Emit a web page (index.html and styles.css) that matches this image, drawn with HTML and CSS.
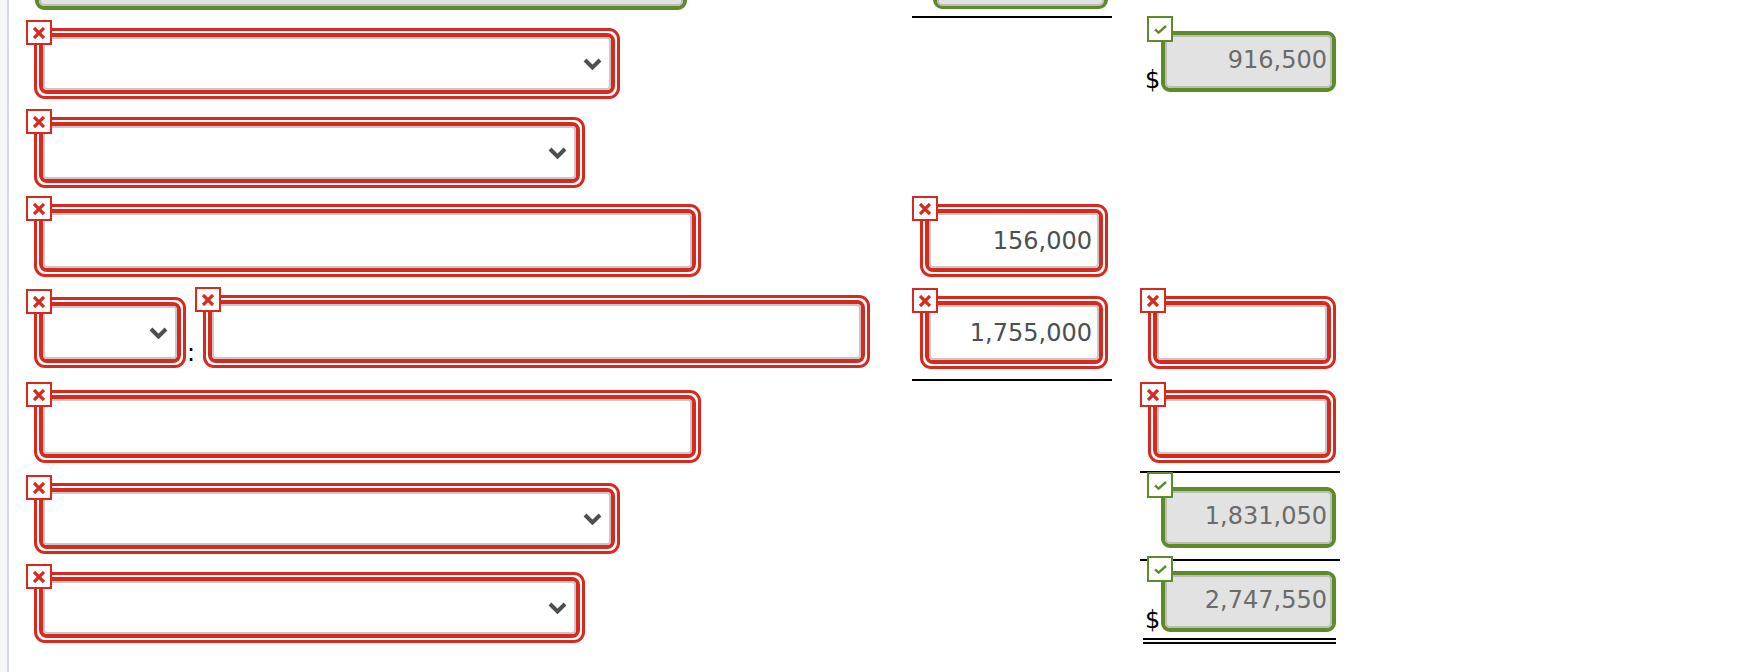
FILE: index.html
```html
<!DOCTYPE html>
<html lang="en">
<head>
<meta charset="UTF-8" />
<title>Worksheet</title>
<link rel="stylesheet" href="styles.css">
</head>
<body>
<div class="page">
  <div class="sheet">

    <!-- row 0 (cut off at top) -->
    <div class="cell">
      <div class="fld ok top-wide"><input class="ctl" readonly></div>
    </div>
    <div class="cell line">
      <div class="amt"><span class="cur"></span>
        <div class="fld ok top-amt"><input class="ctl" readonly></div>
      </div>
    </div>
    <div class="cell"></div>

    <!-- row 1 -->
    <div class="cell pt10">
      <div class="fld bad sel-long">
        <span class="badge"><svg viewBox="0 0 12 12"><path d="M1 1L11 11M11 1L1 11"/></svg></span>
        <div class="ring"><div class="ctl sel"><svg viewBox="0 0 19 12"><path d="M2 2L9.5 9.5L17 2"/></svg></div></div>
      </div>
    </div>
    <div class="cell"></div>
    <div class="cell pt13">
      <div class="amt"><span class="cur">$</span>
        <div class="fld ok">
          <span class="badge"><svg viewBox="0 0 13 9"><path d="M1 4.3L4.6 7.6L12 1"/></svg></span>
          <input class="ctl" value="916,500" readonly>
        </div>
      </div>
    </div>

    <!-- row 2 -->
    <div class="cell pt11">
      <div class="fld bad sel-short">
        <span class="badge"><svg viewBox="0 0 12 12"><path d="M1 1L11 11M11 1L1 11"/></svg></span>
        <div class="ring"><div class="ctl sel"><svg viewBox="0 0 19 12"><path d="M2 2L9.5 9.5L17 2"/></svg></div></div>
      </div>
    </div>
    <div class="cell"></div>
    <div class="cell"></div>

    <!-- row 3 -->
    <div class="cell pt10">
      <div class="fld bad txt-long">
        <span class="badge"><svg viewBox="0 0 12 12"><path d="M1 1L11 11M11 1L1 11"/></svg></span>
        <div class="ring"><input class="ctl" readonly></div>
      </div>
    </div>
    <div class="cell pt10">
      <div class="fld bad num">
        <span class="badge"><svg viewBox="0 0 12 12"><path d="M1 1L11 11M11 1L1 11"/></svg></span>
        <div class="ring"><input class="ctl" value="156,000" readonly></div>
      </div>
    </div>
    <div class="cell"></div>

    <!-- row 4 -->
    <div class="cell pt11">
      <div class="pair">
        <div class="fld bad sel-small">
          <span class="badge"><svg viewBox="0 0 12 12"><path d="M1 1L11 11M11 1L1 11"/></svg></span>
          <div class="ring"><div class="ctl sel"><svg viewBox="0 0 19 12"><path d="M2 2L9.5 9.5L17 2"/></svg></div></div>
        </div>
        <span class="colon">:</span>
        <div class="fld bad txt-long">
          <span class="badge"><svg viewBox="0 0 12 12"><path d="M1 1L11 11M11 1L1 11"/></svg></span>
          <div class="ring"><input class="ctl" readonly></div>
        </div>
      </div>
    </div>
    <div class="cell pt12 line">
      <div class="fld bad num">
        <span class="badge"><svg viewBox="0 0 12 12"><path d="M1 1L11 11M11 1L1 11"/></svg></span>
        <div class="ring"><input class="ctl" value="1,755,000" readonly></div>
      </div>
    </div>
    <div class="cell pt12">
      <div class="fld bad num">
        <span class="badge"><svg viewBox="0 0 12 12"><path d="M1 1L11 11M11 1L1 11"/></svg></span>
        <div class="ring"><input class="ctl" readonly></div>
      </div>
    </div>

    <!-- row 5 -->
    <div class="cell pt9">
      <div class="fld bad txt-long">
        <span class="badge"><svg viewBox="0 0 12 12"><path d="M1 1L11 11M11 1L1 11"/></svg></span>
        <div class="ring"><input class="ctl" readonly></div>
      </div>
    </div>
    <div class="cell"></div>
    <div class="cell pt9 line">
      <div class="fld bad num">
        <span class="badge"><svg viewBox="0 0 12 12"><path d="M1 1L11 11M11 1L1 11"/></svg></span>
        <div class="ring"><input class="ctl" readonly></div>
      </div>
    </div>

    <!-- row 6 -->
    <div class="cell pt10">
      <div class="fld bad sel-long">
        <span class="badge"><svg viewBox="0 0 12 12"><path d="M1 1L11 11M11 1L1 11"/></svg></span>
        <div class="ring"><div class="ctl sel"><svg viewBox="0 0 19 12"><path d="M2 2L9.5 9.5L17 2"/></svg></div></div>
      </div>
    </div>
    <div class="cell"></div>
    <div class="cell pt14 line">
      <div class="amt"><span class="cur"></span>
        <div class="fld ok">
          <span class="badge"><svg viewBox="0 0 13 9"><path d="M1 4.3L4.6 7.6L12 1"/></svg></span>
          <input class="ctl" value="1,831,050" readonly>
        </div>
      </div>
    </div>

    <!-- row 7 -->
    <div class="cell pt11">
      <div class="fld bad sel-short">
        <span class="badge"><svg viewBox="0 0 12 12"><path d="M1 1L11 11M11 1L1 11"/></svg></span>
        <div class="ring"><div class="ctl sel"><svg viewBox="0 0 19 12"><path d="M2 2L9.5 9.5L17 2"/></svg></div></div>
      </div>
    </div>
    <div class="cell"></div>
    <div class="cell pt10">
      <div class="amt dbl"><span class="cur">$</span>
        <div class="fld ok">
          <span class="badge"><svg viewBox="0 0 13 9"><path d="M1 4.3L4.6 7.6L12 1"/></svg></span>
          <input class="ctl" value="2,747,550" readonly>
        </div>
      </div>
    </div>

  </div>
</div>
</body>
</html>
```

FILE: styles.css
```css
html, body { margin:0; padding:0; height:100%; background:#f6f7f9; overflow:hidden; }
body { font-family:"DejaVu Sans", Verdana, sans-serif; font-size:24px; color:#000; }

.page { display:flow-root; margin-left:7px; border-left:2px solid #d5dae4; background:#fff; height:100vh; overflow:hidden; }

.sheet { display:grid; grid-template-columns:858px 200px 200px; column-gap:28px;
  grid-template-rows:70px 88px 88px 90px 97px 92px 88px 89px;
  margin-top:-52px; padding-left:17px; }

.cell { box-sizing:border-box; }
.cell.line { border-bottom:2px solid #000; }
.pt9 { padding-top:9px; }
.pt10 { padding-top:10px; }
.pt11 { padding-top:11px; }
.pt12 { padding-top:12px; }
.pt13 { padding-top:13px; }
.pt14 { padding-top:14px; }

/* fields */
.fld { position:relative; box-sizing:border-box; }
.ctl { display:block; box-sizing:border-box; width:100%; margin:0; font:inherit; outline:none;
  border:2px solid #c8c8c8; border-radius:4px; background:#fff; text-align:right;
  padding:0 5px 0 5px; color:#4b4f54; }
.sel { display:flex; align-items:center; justify-content:flex-end; padding-right:7px; height:53px; }
.sel svg { width:19px; height:12px; fill:none; stroke:#4d4f52; stroke-width:4; }

/* wrong answer: double red ring */
.bad { margin-left:8px; border:3px solid #d7291d; border-radius:11px; padding:2px; background:#fff; }
.bad .ring { border:4px solid #d7291d; border-radius:8px; }
.bad input.ctl { height:55px; }
.bad .badge { position:absolute; left:-11px; top:-11px; width:26px; height:25px;
  border:2px solid #d7291d; }
.bad .badge svg { width:12px; height:12px; fill:none; stroke:#d7291d; stroke-width:3.3; }

.sel-long { width:586px; }
.sel-short { width:551px; }
.sel-small { width:152px; }
.txt-long { width:667px; }
.num { width:188px; }

/* right answer: green frame, greyed value */
.ok { width:175px; border:4px solid #5f8a28; border-radius:9px; }
.ok .ctl { height:53px; background:#e2e2e2; border-color:#bdbdbd; border-radius:5px;
  color:#6b6b6b; padding:0 3px 3px 0; }
.ok .badge { position:absolute; left:-18px; top:-19px; width:26px; height:26px;
  border:2px solid #5f8a28; }
.ok .badge svg { width:13px; height:9px; fill:none; stroke:#5f8a28; stroke-width:2.4; }
.top-wide { width:652px; margin-left:9px; }
.top-wide .ctl, .top-amt .ctl { height:54px; }
.top-amt { height:61px; }

.badge { box-sizing:border-box; background:#fff; z-index:1;
  display:flex; align-items:center; justify-content:center; }

/* amounts column */
.amt { display:flex; }
.cur { width:21px; box-sizing:border-box; padding-left:5px; align-self:flex-end; line-height:24px; }
.amt.dbl { margin-left:3px; width:193px; border-bottom:6px double #000; padding-bottom:6px; }
.amt.dbl .cur { width:18px; padding-left:2px; }

.pair { display:flex; align-items:flex-end; }
.pair .colon { width:9px; line-height:24px; margin-bottom:3px; padding-left:1px; box-sizing:border-box; }
```
